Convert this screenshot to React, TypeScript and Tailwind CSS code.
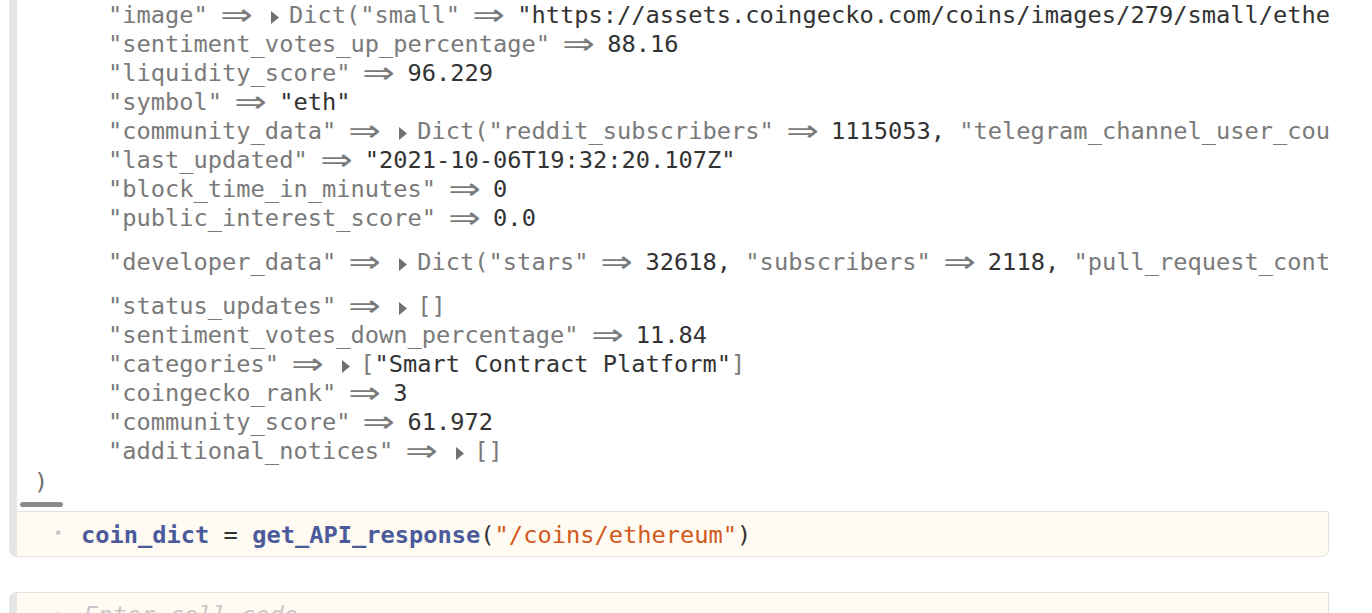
import type { ReactNode } from 'react';

const K = ({ children }: { children: ReactNode }) => <span className="text-[#7a7a7a]">{children}</span>;
const V = ({ children }: { children: ReactNode }) => <span className="text-[#333]">{children}</span>;

const Arrow = () => (
  <span className="inline-block w-[57.1px] text-center">
    <span className="inline-block translate-y-[2px] font-['DejaVu_Sans',sans-serif] text-[30px] leading-[0] text-[#7a7a7a] scale-x-[1.3]">⇒</span>
  </span>
);

const Tri = () => (
  <span className="inline-block w-[24px]">
    <svg className="ml-[6px] inline-block align-[-1px]" width="8" height="13" viewBox="0 0 8 13">
      <polygon points="0,0 8,6.5 0,13" fill="#707070" />
    </svg>
  </span>
);

const Row = ({ children, tall }: { children: ReactNode; tall?: boolean }) => (
  <div className={tall ? 'h-[59px] py-[15px] leading-[29px]' : 'h-[29px] leading-[29px]'}>{children}</div>
);

export default function App() {
  return (
    <div className="h-[613px] overflow-hidden bg-white font-['DejaVu_Sans_Mono',monospace] text-[23.7px]">
      <div className="ml-[9px] w-[1320px]">
        {/* cell with output */}
        <div className="flex">
          <div className="w-[8px] shrink-0 rounded-bl-[8px] bg-[#e5e5e5]" />
          <div className="min-w-0 flex-1">
            <div className="overflow-hidden whitespace-nowrap pl-[91px] pt-[1px]">
              <Row>
                <K>"image"</K><Arrow /><Tri /><K>Dict(</K><K>"small"</K><Arrow />
                <V>"https://assets.coingecko.com/coins/images/279/small/ethereum.png?1595348880"</V><K>, "thumb"</K>
              </Row>
              <Row><K>"sentiment_votes_up_percentage"</K><Arrow /><V>88.16</V></Row>
              <Row><K>"liquidity_score"</K><Arrow /><V>96.229</V></Row>
              <Row><K>"symbol"</K><Arrow /><V>"eth"</V></Row>
              <Row>
                <K>"community_data"</K><Arrow /><Tri /><K>Dict(</K><K>"reddit_subscribers"</K><Arrow />
                <V>1115053</V><V>, </V><K>"telegram_channel_user_count"</K><Arrow /><V>nothing</V>
              </Row>
              <Row><K>"last_updated"</K><Arrow /><V>"2021-10-06T19:32:20.107Z"</V></Row>
              <Row><K>"block_time_in_minutes"</K><Arrow /><V>0</V></Row>
              <Row><K>"public_interest_score"</K><Arrow /><V>0.0</V></Row>
              <Row tall>
                <K>"developer_data"</K><Arrow /><Tri /><K>Dict(</K><K>"stars"</K><Arrow /><V>32618</V><V>, </V>
                <K>"subscribers"</K><Arrow /><V>2118</V><V>, </V><K>"pull_request_contributors"</K><Arrow /><V>3456</V>
              </Row>
              <Row><K>"status_updates"</K><Arrow /><Tri /><K>[]</K></Row>
              <Row><K>"sentiment_votes_down_percentage"</K><Arrow /><V>11.84</V></Row>
              <Row><K>"categories"</K><Arrow /><Tri /><K>[</K><V>"Smart Contract Platform"</V><K>]</K></Row>
              <Row><K>"coingecko_rank"</K><Arrow /><V>3</V></Row>
              <Row><K>"community_score"</K><Arrow /><V>61.972</V></Row>
              <Row><K>"additional_notices"</K><Arrow /><Tri /><K>[]</K></Row>
            </div>
            <div className="h-[30px] pl-[17px] pt-[2px] leading-[29px] text-[#6f6f6f]">)</div>
            <div className="mb-[4px] ml-[3px] mt-[6px] h-[5px] w-[43px] rounded-full bg-[#8a8a8a]" />
            <div className="flex h-[46px] items-center rounded-br-[8px] border-y border-r border-[#e2e2e2] bg-[#fffaf2] pl-[34px] whitespace-nowrap">
              <span className="w-[14px] text-center text-[16px] text-[#c8c8c8]">•</span>
              <span className="ml-[16px] pt-[3px]">
                <span className="font-bold text-[#4a5a9a]">coin_dict</span>
                <span className="text-[#333]"> = </span>
                <span className="font-bold text-[#4a5a9a]">get_API_response</span>
                <span className="text-[#333]">(</span>
                <span className="text-[#d0591c]">"/coins/ethereum"</span>
                <span className="text-[#333]">)</span>
              </span>
            </div>
          </div>
        </div>

        {/* empty cell */}
        <div className="mt-[35px] flex h-[60px]">
          <div className="w-[8px] shrink-0 rounded-tl-[8px] bg-[#e5e5e5]" />
          <div className="flex flex-1 items-start border-t border-r border-[#e2e2e2] bg-[#fffaf2] pl-[34px] pt-[8px] whitespace-nowrap">
            <span className="w-[14px] text-center text-[16px] leading-[29px] text-[#d8d8d8]">•</span>
            <span className="ml-[19px] italic leading-[29px] text-[#c8c8c8]">Enter cell code...</span>
          </div>
        </div>
      </div>
    </div>
  );
}
